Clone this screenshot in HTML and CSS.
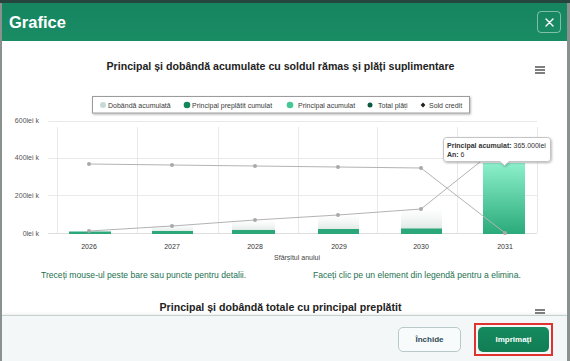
FILE: index.html
```
<!DOCTYPE html>
<html lang="ro">
<head>
<meta charset="utf-8">
<title>Grafice</title>
<link rel="stylesheet" href="styles.css">
</head>
<body>
<div class="modal">
  <header class="modal-header">
    <h1 class="modal-title">Grafice</h1>
    <button class="btn-close" aria-label="Închide">
      <svg width="9" height="9" viewBox="0 0 9 9"><path d="M1 1L8 8M8 1L1 8" stroke="#fff" stroke-width="1.4" stroke-linecap="round"/></svg>
    </button>
  </header>
  <div class="modal-body">
    <section class="chart">
      <div class="chart-head">
        <h2 class="chart-title">Principal și dobândă acumulate cu soldul rămas și plăți suplimentare</h2>
        <span class="chart-menu"><svg width="10" height="8" viewBox="0 0 10 8"><path d="M0 1H10M0 4H10M0 7H10" stroke="#555" stroke-width="1.3"/></svg></span>
      </div>
      <svg class="plot" viewBox="2 80 557 184" font-family="Liberation Sans, Arial, sans-serif">
        <defs>
          <linearGradient id="gBig" x1="0" y1="0" x2="0" y2="1">
            <stop offset="0" stop-color="#8cf0cb"/>
            <stop offset="1" stop-color="#2aaa7b"/>
          </linearGradient>
          <linearGradient id="gFade" x1="0" y1="0" x2="0" y2="1">
            <stop offset="0" stop-color="#f2f6f4" stop-opacity="0.2"/>
            <stop offset="1" stop-color="#dde8e4"/>
          </linearGradient>
          <filter id="sh" x="-10%" y="-30%" width="120%" height="170%">
            <feDropShadow dx="0.8" dy="1" stdDeviation="0.9" flood-opacity="0.3"/>
          </filter>
        </defs>
        <!-- grid -->
        <g stroke="#e9e9e9" stroke-width="1">
          <path d="M48 121.5H537M48 158.5H537M48 195.5H537"/>
          <path d="M57.5 127V233M137.5 127V233M218.5 127V233M298.5 127V233M377.5 127V233M457.5 127V233M537.5 127V233"/>
        </g>
        <path d="M48 233.5H537" stroke="#dedede"/>
        <!-- faded interest bars -->
        <g fill="url(#gFade)">
          <rect x="152" y="225" width="41" height="7"/>
          <rect x="232" y="221" width="43" height="10"/>
          <rect x="318" y="216" width="41" height="14"/>
          <rect x="401" y="210" width="41" height="19"/>
        </g>
        <!-- small principal bars -->
        <g fill="#2ba77a">
          <rect x="69" y="231.5" width="42" height="2.5"/>
          <rect x="152" y="231" width="41" height="3"/>
          <rect x="232" y="230" width="43" height="4"/>
          <rect x="318" y="229" width="41" height="5"/>
          <rect x="401" y="228.5" width="41" height="5.5"/>
        </g>
        <rect x="483" y="163" width="42" height="71" fill="url(#gBig)"/>
        <!-- lines -->
        <g fill="none" stroke="#b3b3b3" stroke-width="1">
          <polyline points="89,164 172,165 255,166 338,167 421,168 505,233"/>
          <polyline points="89,231 172,226 255,220 338,215 421,209 505,142"/>
        </g>
        <g fill="#a9a9a9">
          <circle cx="89" cy="164" r="2"/><circle cx="172" cy="165" r="2"/><circle cx="255" cy="166" r="2"/><circle cx="338" cy="167" r="2"/><circle cx="421" cy="168" r="2"/><circle cx="505" cy="233" r="2"/>
          <circle cx="89" cy="231" r="2"/><circle cx="172" cy="226" r="2"/><circle cx="255" cy="220" r="2"/><circle cx="338" cy="215" r="2"/><circle cx="421" cy="209" r="2"/>
        </g>
        <!-- axis labels -->
        <g font-size="7" fill="#555" text-anchor="end">
          <text x="39" y="122.5">600lei k</text>
          <text x="39" y="160.3">400lei k</text>
          <text x="39" y="197.5">200lei k</text>
          <text x="39" y="235.5">0lei k</text>
        </g>
        <g font-size="7" fill="#333" text-anchor="middle">
          <text x="89" y="248.5">2026</text>
          <text x="172" y="248.5">2027</text>
          <text x="255" y="248.5">2028</text>
          <text x="339" y="248.5">2029</text>
          <text x="421" y="248.5">2030</text>
          <text x="505" y="248.5">2031</text>
          <text x="297" y="259.5" fill="#444">Sfârșitul anului</text>
        </g>
        <!-- legend -->
        <rect x="92.5" y="96.5" width="377" height="16.5" fill="#fff" stroke="#9c9c9c" filter="url(#sh)"/>
        <circle cx="103" cy="105" r="3" fill="#c6dad3"/>
        <circle cx="187" cy="105" r="3.3" fill="#13875c"/>
        <circle cx="290" cy="105" r="3.3" fill="#46c796"/>
        <circle cx="370" cy="105" r="2.5" fill="#0e5a3e"/>
        <path d="M423 102.6L425.4 105L423 107.4L420.6 105Z" fill="#222"/>
        <g font-size="7" fill="#3a3a3a">
          <text x="108" y="107.5">Dobândă acumulată</text>
          <text x="192" y="107.5">Principal preplătit cumulat</text>
          <text x="298" y="107.5">Principal acumulat</text>
          <text x="378" y="107.5">Total plăți</text>
          <text x="429" y="107.5">Sold credit</text>
        </g>
        <!-- tooltip -->
        <path d="M446.5 137.5H547.5Q550.5 137.5 550.5 140.5V158.5Q550.5 161.5 547.5 161.5H509L504.5 165.5L500 161.5H446.5Q443.5 161.5 443.5 158.5V140.5Q443.5 137.5 446.5 137.5Z" fill="#fff" stroke="#c4c4c4" filter="url(#sh)"/>
        <g font-size="7" fill="#333">
          <text x="447" y="147.5"><tspan font-weight="bold">Principal acumulat:</tspan> 365.000lei</text>
          <text x="447" y="156.5"><tspan font-weight="bold">An:</tspan> 6</text>
        </g>
      </svg>
      <div class="chart-notes">
        <span>Treceți mouse-ul peste bare sau puncte pentru detalii.</span>
        <span>Faceți clic pe un element din legendă pentru a elimina.</span>
      </div>
    </section>
    <section class="chart">
      <div class="chart-head chart-head--second">
        <h2 class="chart-title">Principal și dobândă totale cu principal preplătit</h2>
        <span class="chart-menu"><svg width="10" height="8" viewBox="0 0 10 8"><path d="M0 1H10M0 4H10M0 7H10" stroke="#555" stroke-width="1.3"/></svg></span>
      </div>
    </section>
  </div>
  <footer class="modal-footer">
    <button class="btn btn-secondary">Închide</button>
    <span class="highlight"><button class="btn btn-primary">Imprimați</button></span>
  </footer>
</div>
</body>
</html>
```
FILE: styles.css
```
* { box-sizing: border-box; }

body {
  margin: 0;
  width: 570px;
  height: 361px;
  overflow: hidden;
  background: linear-gradient(#27453f 0 3px, #8a9290 3px);
  font-family: "Liberation Sans", Arial, sans-serif;
}

.modal {
  margin: 3px 3px 0 2px;
  height: 358px;
  background: #fff;
  display: flex;
  flex-direction: column;
  overflow: hidden;
}

.modal-header {
  flex: 0 0 38px;
  background: linear-gradient(#158560, #1a8c64);
  display: flex;
  align-items: center;
  justify-content: space-between;
  padding: 0 6px 0 7px;
}

.modal-title {
  margin: 0;
  font-size: 16.5px;
  font-weight: 700;
  color: #fff;
}

.btn-close {
  width: 24px;
  height: 22px;
  border: 1px solid rgba(255, 255, 255, 0.45);
  border-radius: 4px;
  background: transparent;
  display: flex;
  align-items: center;
  justify-content: center;
  padding: 0;
}

.modal-body {
  flex: 0 0 274px;
  overflow: hidden;
  padding-right: 8px;
}

.chart-head {
  position: relative;
  padding-top: 18px;
  text-align: center;
}

.chart-title {
  margin: 0;
  font-size: 10.6px;
  line-height: 14px;
  font-weight: 700;
  color: #222;
}

.chart-menu {
  position: absolute;
  right: 14px;
  top: 25px;
  width: 10px;
  height: 8px;
  display: block;
}

.chart-menu svg { display: block; }

.plot {
  display: block;
  margin-top: 7px;
  width: 557px;
  height: 184px;
}

.chart-notes {
  display: grid;
  grid-template-columns: 272px auto;
  padding-left: 39px;
  margin-top: 5px;
  font-size: 8.6px;
  line-height: 12px;
  color: #23704f;
}

.chart-head--second { padding-top: 19px; }
.chart-head--second .chart-menu { top: 28px; }

.modal-footer {
  flex: 1;
  background: #f4f7f7;
  border-top: 1px solid #c3d2ce;
  box-shadow: 0 -1px 3px rgba(0, 0, 0, 0.08);
  display: flex;
  justify-content: flex-end;
  align-items: flex-start;
  gap: 13px;
  padding: 7px 14px 0 0;
}

.btn {
  display: block;
  height: 25px;
  border-radius: 5px;
  font-family: inherit;
  font-size: 8px;
  font-weight: 700;
  padding: 0;
}

.btn-secondary {
  width: 63px;
  margin-top: 4px;
  background: #f8fbfb;
  border: 1px solid #b9c8c9;
  color: #2f4858;
}

.highlight {
  display: block;
  border: 2px solid #e0332f;
  padding: 2px;
}

.btn-primary {
  width: 71px;
  background: linear-gradient(#168a5f, #117d55);
  border: none;
  color: #fff;
}
```
